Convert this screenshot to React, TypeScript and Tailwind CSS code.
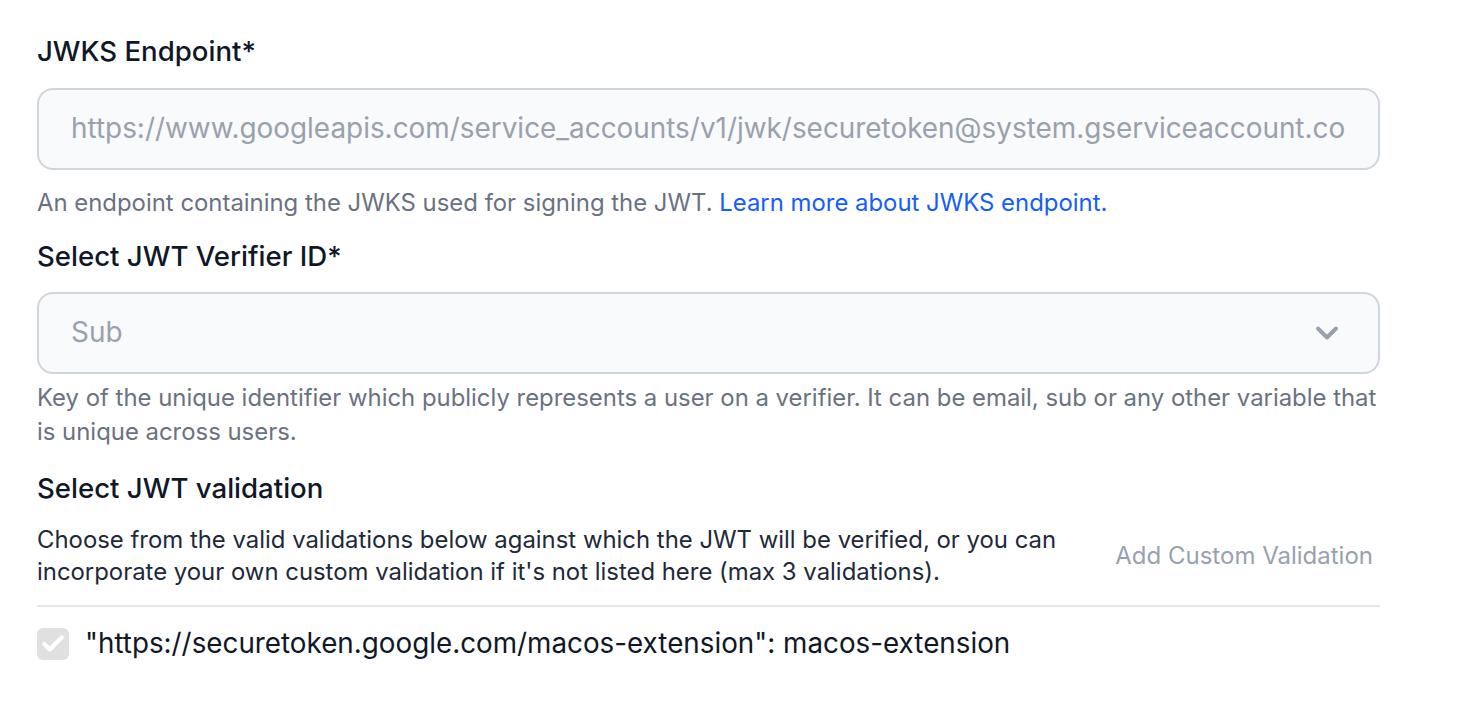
import { ChevronDown, Check } from "lucide-react";

export default function App() {
  return (
    <div className="min-h-screen bg-white pl-[37px] pt-[33px] font-['Inter',sans-serif]">
      <div className="w-[1343px]">
        <label className="block text-[27.6px] leading-[36px] font-medium text-gray-900">
          JWKS Endpoint*
        </label>
        <div className="mt-[19px] flex h-[82px] items-center rounded-2xl border-2 border-gray-300 bg-gray-50 px-[32px]">
          <div className="flex-1 overflow-hidden">
            <span className="whitespace-nowrap text-[27.9px] text-gray-400">
              https://www.googleapis.com/service_accounts/v1/jwk/securetoken@system.gserviceaccount.com
            </span>
          </div>
        </div>
        <p className="mt-[17px] text-[23.9px] leading-[32px] text-gray-500">
          An endpoint containing the JWKS used for signing the JWT.{" "}
          <a className="text-blue-600">Learn more about JWKS endpoint.</a>
        </p>

        <label className="mt-[19px] block text-[27.6px] leading-[36px] font-medium text-gray-900">
          Select JWT Verifier ID*
        </label>
        <div className="mt-[18px] flex h-[82px] items-center justify-between rounded-2xl border-2 border-gray-300 bg-gray-50 pl-[32px] pr-[33px]">
          <span className="text-[27.9px] text-gray-400">Sub</span>
          <ChevronDown className="text-gray-400" size={36} strokeWidth={2.6} />
        </div>
        <p className="mt-[7px] text-[23.9px] leading-[34px] text-gray-500">
          Key of the unique identifier which publicly represents a user on a verifier. It can be email, sub or any other variable that is unique across users.
        </p>

        <h3 className="mt-[21px] text-[27.6px] leading-[36px] font-medium text-gray-900">
          Select JWT validation
        </h3>
        <div className="mt-[18px] flex items-center justify-between">
          <p className="w-[1040px] text-[23.9px] leading-[32px] text-gray-800">
            Choose from the valid validations below against which the JWT will be verified, or you can incorporate your own custom validation if it's not listed here (max 3 validations).
          </p>
          <button className="mr-[7px] text-[24px] text-gray-400">Add Custom Validation</button>
        </div>
        <div className="mt-[17px] h-[2px] bg-gray-200" />
        <div className="mt-[16px] flex items-center gap-[16px]">
          <div className="flex h-[32px] w-[32px] items-center justify-center rounded-md bg-[#e0e0e0]">
            <Check className="text-white" size={26} strokeWidth={4} />
          </div>
          <span className="text-[27.8px] text-gray-900">
            "https://securetoken.google.com/macos-extension": macos-extension
          </span>
        </div>
      </div>
    </div>
  );
}
